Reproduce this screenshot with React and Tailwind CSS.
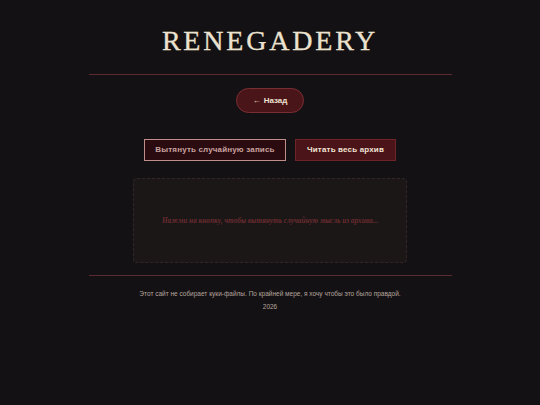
export default function App() {
  return (
    <div className="min-h-[405px] w-full bg-[#141114] flex flex-col items-center" style={{ fontFamily: '"Liberation Sans", Arial, sans-serif' }}>
      {/* header */}
      <div className="w-[363px] flex flex-col items-center border-b border-[#5e2a31] pt-[25px] pb-[17px]">
        <h1
          className="text-[28px] leading-[32px] tracking-[0.1em] text-[#ece2d0]"
          style={{ fontFamily: '"Liberation Serif", "DejaVu Serif", serif', WebkitTextStroke: "0.3px #ece2d0" }}
        >
          RENEGADERY
        </h1>
      </div>

      <button className="mt-[13px] h-[25px] w-[68px] rounded-full bg-[#4a1518] border border-[#7a2e33] text-[#f0e2d2] text-[8px] font-bold flex items-center justify-center gap-[3px]">
        <span>←</span>
        <span>Назад</span>
      </button>

      {/* actions */}
      <div className="mt-[26px] flex gap-[9px]">
        <button className="h-[22px] w-[142px] bg-[#2a0b0f] border border-[#c08f8c] text-[#c9a29f] text-[8px] font-bold tracking-[0.02em]">
          Вытянуть случайную запись
        </button>
        <button className="h-[22px] w-[101px] bg-[#4a1418] border border-[#6e2429] text-[#f2e4d6] text-[8px] font-bold tracking-[0.02em]">
          Читать весь архив
        </button>
      </div>

      <div className="mt-[17px] w-[274px] h-[85px] rounded-[4px] border border-dashed border-[#33242a] bg-[#1a1716] flex items-center justify-center">
        <p
          className="italic font-bold whitespace-nowrap text-[7.3px] pt-[2px] text-[#6a2b30]"
          style={{ fontFamily: '"Liberation Serif", "DejaVu Serif", serif' }}
        >
          Нажми на кнопку, чтобы вытянуть случайную мысль из архива...
        </p>
      </div>

      {/* footer */}
      <div className="mt-[12px] w-[363px] border-t border-[#5e2a31] pt-[13px] flex flex-col items-center gap-[4px] text-[6.5px] leading-[9px] text-[#b4a59c]">
        <p>Этот сайт не собирает куки-файлы. По крайней мере, я хочу чтобы это было правдой.</p>
        <p>2026</p>
      </div>
    </div>
  );
}
